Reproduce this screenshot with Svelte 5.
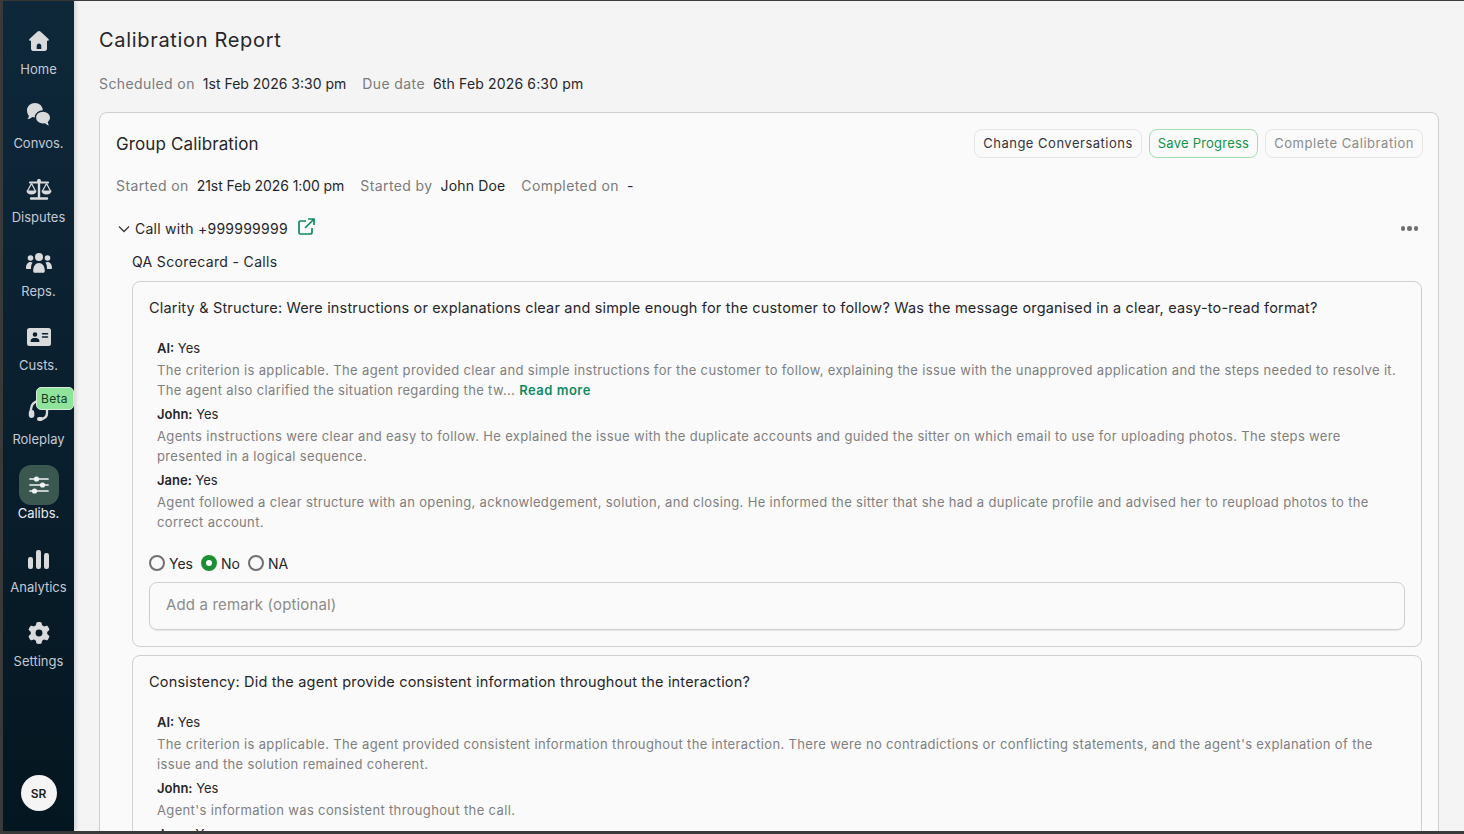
<script>
  const nav = [
    { label: 'Home', icon: 'home' },
    { label: 'Convos.', icon: 'convos' },
    { label: 'Disputes', icon: 'scale' },
    { label: 'Reps.', icon: 'users' },
    { label: 'Custs.', icon: 'card' },
    { label: 'Roleplay', icon: 'headset', beta: true },
    { label: 'Calibs.', icon: 'sliders', active: true },
    { label: 'Analytics', icon: 'chart' },
    { label: 'Settings', icon: 'gear' }
  ];

  const questions = [
    {
      title: 'Clarity & Structure: Were instructions or explanations clear and simple enough for the customer to follow? Was the message organised in a clear, easy-to-read format?',
      answers: [
        { who: 'AI', value: 'Yes', text: 'The criterion is applicable. The agent provided clear and simple instructions for the customer to follow, explaining the issue with the unapproved application and the steps needed to resolve it. The agent also clarified the situation regarding the tw...', more: true },
        { who: 'John', value: 'Yes', text: 'Agents instructions were clear and easy to follow. He explained the issue with the duplicate accounts and guided the sitter on which email to use for uploading photos. The steps were presented in a logical sequence.' },
        { who: 'Jane', value: 'Yes', text: 'Agent followed a clear structure with an opening, acknowledgement, solution, and closing. He informed the sitter that she had a duplicate profile and advised her to reupload photos to the correct account.' }
      ],
      form: true
    },
    {
      title: 'Consistency: Did the agent provide consistent information throughout the interaction?',
      answers: [
        { who: 'AI', value: 'Yes', text: "The criterion is applicable. The agent provided consistent information throughout the interaction. There were no contradictions or conflicting statements, and the agent's explanation of the issue and the solution remained coherent." },
        { who: 'John', value: 'Yes', text: "Agent's information was consistent throughout the call." },
        { who: 'Jane', value: 'Yes', text: '' }
      ]
    }
  ];
</script>

<div class="frame">
  <aside class="sidebar">
    <nav class="nav">
      {#each nav as item}
        <div class="nav-item" class:active={item.active}>
          <span class="nav-icon">
            {#if item.icon === 'home'}
              <svg width="20" height="20" viewBox="0 0 20 20"><path fill="currentColor" fill-rule="evenodd" d="M10 0c.5 0 1 .2 1.400.6l8.100 7.300c.7.7.3 1.800-.7 1.800H18v8.100c0 1.200-.9 2.200-2 2.200H4c-1.100 0-2-1-2-2.200V9.700h-.8c-1 0-1.400-1.100-.7-1.800L8.600.6C9 .2 9.500 0 10 0zM10 12.600c-1.300 0-2.300 1-2.300 2.300V18h4.600v-3.100c0-1.300-1-2.300-2.300-2.300z"/></svg>
            {:else if item.icon === 'convos'}
              <svg width="24" height="24" viewBox="0 0 24 24"><path fill="currentColor" d="M8 0c4.300 0 7.800 3.200 7.800 7.200S12.300 14.400 8 14.400c-.9 0-1.800-.1-2.600-.4C4 15.200 2.300 16 .3 16.100c.9-.9 1.500-2 1.600-3.400C.6 11.400 0 9.400 0 7.200 0 3.200 3.700 0 8 0z"/><path fill="currentColor" stroke="#0d2638" stroke-width="1.300" d="M16 8c4.300 0 7.700 2.900 7.700 6.500 0 1.900-.9 3.500-2.300 4.700.1 1.300.9 2.900 2.300 4.200-2.200-.1-4.300-1-5.800-2.500-.6.100-1.200.2-1.900.2-4.200 0-7.600-2.900-7.600-6.600S11.800 8 16 8z"/></svg>
            {:else if item.icon === 'scale'}
              <svg width="26" height="21" viewBox="0 0 26 21"><g stroke="currentColor" fill="none"><path d="M13 1v18M5 19.500h16" stroke-width="2.400" stroke-linecap="round"/><path d="M4 3.500h18" stroke-width="2.200" stroke-linecap="round"/><path d="M5.500 4.500 1.500 12M5.500 4.500 9.500 12M20.500 4.500 16.500 12M20.500 4.500 24.500 12" stroke-width="1.300"/></g><g fill="currentColor"><circle cx="13" cy="2" r="2"/><path d="M.5 11.500h10c0 2.500-2.200 4-5 4s-5-1.500-5-4zM15.500 11.500h10c0 2.500-2.200 4-5 4s-5-1.500-5-4z"/></g></svg>
            {:else if item.icon === 'users'}
              <svg width="26" height="20" viewBox="0 0 26 20"><g fill="currentColor"><circle cx="13" cy="4" r="4"/><circle cx="4.500" cy="5" r="2.800"/><circle cx="21.500" cy="5" r="2.800"/><path d="M7.200 18c0-5 2.400-8 5.800-8s5.800 3 5.800 8c0 1-.7 1.800-1.500 1.800H8.700c-.8 0-1.500-.8-1.500-1.800zM0 15c0-3.500 1.800-6 4.500-6 .8 0 1.500.2 2.100.6C5.400 11.200 5 13.400 5 16H1c-.6 0-1-.4-1-1zM26 15c0-3.500-1.800-6-4.500-6-.8 0-1.500.2-2.100.6 1.200 1.600 1.600 3.800 1.600 6.400h4c.6 0 1-.4 1-1z"/></g></svg>
            {:else if item.icon === 'card'}
              <svg width="24" height="18" viewBox="0 0 24 18"><path fill="currentColor" fill-rule="evenodd" d="M2.500 0h19A2.500 2.500 0 0 1 24 2.500v13a2.500 2.500 0 0 1-2.500 2.500h-19A2.500 2.500 0 0 1 0 15.500v-13A2.500 2.500 0 0 1 2.500 0zM8 4.200a2.300 2.300 0 1 0 0 4.600 2.300 2.300 0 0 0 0-4.600zM3.500 13.300c0 .5.300.7.700.7h7.600c.4 0 .7-.2.700-.7 0-1.800-1.500-3.300-3.300-3.300H6.800c-1.800 0-3.300 1.500-3.300 3.300zM15.500 5a.8.8 0 0 0 0 1.600h5a.8.8 0 0 0 0-1.600zM15.500 8.200a.8.8 0 0 0 0 1.600h5a.8.8 0 0 0 0-1.600z"/></svg>
            {:else if item.icon === 'headset'}
              <svg width="24" height="24" viewBox="0 0 24 24"><path fill="none" stroke="currentColor" stroke-width="2.400" d="M4 13V10a8 8 0 0 1 16 0v3M20 14c0 4-3 6-7 6" stroke-linecap="round"/><rect x="1.800" y="11" width="5.500" height="8" rx="2.400" fill="currentColor"/><rect x="10" y="18" width="6" height="4" rx="2" fill="currentColor"/></svg>
            {:else if item.icon === 'sliders'}
              <svg width="20" height="18" viewBox="0 0 20 18"><g stroke="currentColor" stroke-width="1.700" stroke-linecap="round"><path d="M1 3h18M1 9h18M1 15h18"/></g><g fill="currentColor"><circle cx="7.500" cy="3" r="2.600"/><circle cx="13.500" cy="9" r="2.600"/><circle cx="5.500" cy="15" r="2.600"/></g></svg>
            {:else if item.icon === 'chart'}
              <svg width="21" height="19" viewBox="0 0 21 19"><g fill="currentColor"><rect x="0" y="7" width="5" height="12" rx="2.200"/><rect x="8" y="0" width="5" height="19" rx="2.200"/><rect x="16" y="3" width="5" height="16" rx="2.200"/></g></svg>
            {:else if item.icon === 'gear'}
              <svg width="22" height="22" viewBox="0 0 512 512"><path fill="currentColor" d="M495.900 166.600c3.200 8.700 .5 18.400-6.400 24.600l-43.300 39.400c1.100 8.300 1.700 16.800 1.700 25.400s-.6 17.100-1.700 25.400l43.300 39.400c6.900 6.200 9.600 15.900 6.400 24.600c-4.400 11.900-9.700 23.300-15.800 34.300l-4.700 8.100c-6.600 11-14 21.400-22.100 31.200c-5.900 7.200-15.700 9.600-24.500 6.800l-55.700-17.700c-13.400 10.300-28.200 18.900-44 25.400l-12.500 57.100c-2 9.100-9 16.300-18.200 17.800c-13.800 2.300-28 3.500-42.500 3.500s-28.700-1.200-42.500-3.500c-9.200-1.500-16.200-8.700-18.200-17.800l-12.500-57.100c-15.800-6.500-30.600-15.100-44-25.400L83.100 425.900c-8.800 2.800-18.600 .3-24.500-6.800c-8.100-9.800-15.500-20.200-22.100-31.200l-4.700-8.100c-6.100-11-11.400-22.400-15.800-34.300c-3.200-8.700-.5-18.400 6.400-24.600l43.300-39.400C64.600 273.100 64 264.600 64 256s.6-17.100 1.700-25.400L22.400 191.200c-6.900-6.200-9.600-15.900-6.400-24.600c4.400-11.900 9.700-23.300 15.800-34.300l4.700-8.100c6.600-11 14-21.400 22.100-31.200c5.900-7.200 15.700-9.600 24.500-6.800l55.700 17.700c13.400-10.300 28.200-18.900 44-25.400l12.500-57.100c2-9.100 9-16.300 18.200-17.800C227.300 1.200 241.500 0 256 0s28.700 1.200 42.500 3.500c9.200 1.500 16.200 8.700 18.200 17.800l12.500 57.100c15.800 6.500 30.600 15.100 44 25.400l55.700-17.700c8.800-2.800 18.600-.3 24.500 6.800c8.100 9.800 15.500 20.200 22.100 31.200l4.700 8.100c6.100 11 11.400 22.400 15.800 34.300zM256 336a80 80 0 1 0 0-160 80 80 0 1 0 0 160z"/></svg>
            {/if}
            {#if item.beta}<span class="beta">Beta</span>{/if}
          </span>
          <span class="nav-label">{item.label}</span>
        </div>
      {/each}
    </nav>
    <div class="avatar">SR</div>
  </aside>

  <main class="main">
    <h1>Calibration Report</h1>
    <div class="meta top-meta">
      <span class="k">Scheduled on</span><span class="v">1st Feb 2026 3:30 pm</span>
      <span class="k">Due date</span><span class="v wide">6th Feb 2026 6:30 pm</span>
    </div>

    <section class="group">
      <div class="group-head">
        <h2>Group Calibration</h2>
        <div class="actions">
          <button class="btn">Change Conversations</button>
          <button class="btn save">Save Progress</button>
          <button class="btn off">Complete Calibration</button>
        </div>
      </div>
      <div class="meta group-meta">
        <span class="k">Started on</span><span class="v tight">21st Feb 2026 1:00 pm</span>
        <span class="k">Started by</span><span class="v wide">John Doe</span>
        <span class="k">Completed on</span><span class="v">-</span>
      </div>

      <div class="call-row">
        <svg class="chev" width="12" height="8" viewBox="0 0 12 8"><path d="M1 1.500 6 6.500 11 1.500" fill="none" stroke="#3a3a3a" stroke-width="1.300"/></svg>
        <span class="call">Call with +999999999</span>
        <svg class="ext" width="17" height="17" viewBox="0 0 17 17"><g fill="none" stroke="#0f8a63" stroke-width="1.700"><path d="M8 3H2.500A1.500 1.500 0 0 0 1 4.500v10A1.500 1.500 0 0 0 2.500 16h10a1.500 1.500 0 0 0 1.500-1.500V10"/><path d="M7 10 15.500 1.500M10 1h6v6"/></g></svg>
        <span class="dots"><i></i><i></i><i></i></span>
      </div>

      <div class="scorecard">QA Scorecard - Calls</div>

      {#each questions as q}
        <article class="question">
          <p class="q-title">{q.title}</p>
          <div class="answers">
            {#each q.answers as a}
              <div class="who"><b>{a.who}:</b> {a.value}</div>
              {#if a.text}
                <p class="reason">{a.text}{#if a.more}{' '}<span class="more">Read more</span>{/if}</p>
              {/if}
            {/each}
          </div>
          {#if q.form}
            <div class="radios">
              <label class="radio"><span class="dot"></span>Yes</label>
              <label class="radio"><span class="dot on"></span>No</label>
              <label class="radio"><span class="dot"></span>NA</label>
            </div>
            <div class="remark">Add a remark (optional)</div>
          {/if}
        </article>
      {/each}
    </section>
  </main>
</div>

<style>
  :global(body) {
    margin: 0;
    background: #2b2b2b;
    overflow: hidden;
  }

  .frame {
    display: flex;
    box-sizing: border-box;
    height: 834px;
    padding: 1px 0 3px 3px;
    background: #3a3a3a;
    font-family: Inter, 'Open Sans', sans-serif;
    color: #222;
    overflow: hidden;
  }

  .sidebar {
    width: 71px;
    flex: none;
    display: flex;
    flex-direction: column;
    justify-content: space-between;
    align-items: center;
    background: linear-gradient(180deg, #0e283a 0%, #0a1f2e 50%, #04161f 100%);
    z-index: 1;
    box-shadow: 2px 0 4px rgba(0, 0, 0, 0.14);
  }

  .nav {
    display: flex;
    flex-direction: column;
    padding-top: 20px;
    width: 100%;
  }

  .nav-item {
    height: 74px;
    display: flex;
    flex-direction: column;
    align-items: center;
    color: #d8dadc;
  }

  .nav-icon {
    position: relative;
    width: 40px;
    height: 40px;
    display: flex;
    align-items: center;
    justify-content: center;
    border-radius: 12px;
  }

  .nav-item.active .nav-icon {
    background: #3a5850;
    color: #f2f4f3;
  }

  .nav-label {
    font-size: 13px;
    line-height: 18px;
    margin-top: -1px;
    color: #c3cad6;
    white-space: nowrap;
  }

  .nav-item.active .nav-label {
    color: #e8ecf2;
  }

  .beta {
    position: absolute;
    top: -4px;
    left: 17px;
    width: 38px;
    height: 23px;
    box-sizing: border-box;
    border: 1px solid #d8ead8;
    border-radius: 5px;
    background: #8fe39a;
    color: #123c24;
    font-size: 12px;
    letter-spacing: 0.3px;
    line-height: 21px;
    text-align: center;
  }

  .avatar {
    width: 36px;
    height: 36px;
    margin-bottom: 20px;
    border-radius: 50%;
    background: #f5f5f5;
    color: #1c1c1c;
    font-size: 12px;
    font-weight: 600;
    display: flex;
    align-items: center;
    justify-content: center;
  }

  .main {
    flex: 1;
    min-width: 0;
    padding: 0 25px;
    background: #f4f4f4;
    overflow: hidden;
  }

  h1 {
    margin: 25px 0 0;
    font-size: 20px;
    line-height: 28px;
    font-weight: 400;
    color: #26262a;
    letter-spacing: 0.68px;
  }

  .meta {
    display: flex;
    align-items: center;
    font-size: 14px;
    line-height: 20px;
  }

  .k {
    color: #7b7b7b;
    margin-right: 8px;
    letter-spacing: 0.4px;
  }

  .v {
    color: #26262a;
    margin-right: 16px;
  }

  .v.wide {
    letter-spacing: 0.15px;
  }

  .v.tight {
    letter-spacing: -0.08px;
  }

  .top-meta {
    margin-top: 20px;
  }

  .group {
    margin-top: 18px;
    padding: 16px;
    border: 1px solid #cfcfcf;
    border-radius: 8px;
    background: #fafafa;
    min-height: 800px;
  }

  .group-head {
    display: flex;
    justify-content: space-between;
    align-items: center;
    height: 29px;
  }

  h2 {
    margin: 0;
    font-size: 17px;
    font-weight: 400;
    letter-spacing: 0.12px;
    color: #26262a;
  }

  .actions {
    display: flex;
    gap: 7px;
    margin: -1px -1px 0 0;
  }

  .btn {
    height: 29px;
    padding: 0 8px;
    border: 1px solid #e6e6e6;
    border-radius: 8px;
    background: #fafafa;
    font: inherit;
    font-size: 13px;
    letter-spacing: 0.5px;
    color: #35353a;
    white-space: nowrap;
  }

  .btn.save {
    border-color: #a3dfae;
    color: #12924a;
    letter-spacing: 0.22px;
  }

  .btn.off {
    color: #8a8a8a;
    letter-spacing: 0.55px;
  }

  .group-meta {
    margin-top: 18px;
  }

  .call-row {
    display: flex;
    align-items: center;
    height: 24px;
    margin-top: 20px;
    position: relative;
  }

  .chev {
    margin: 2px 5px 0 2px;
  }

  .call {
    font-size: 14px;
    letter-spacing: 0.25px;
    color: #26262a;
  }

  .ext {
    margin: -4px 0 0 10px;
  }

  .dots {
    margin: 1px 4px 0 auto;
    display: flex;
    gap: 2px;
  }

  .dots i {
    width: 4.500px;
    height: 4.500px;
    border-radius: 50%;
    background: #6f6f6f;
  }

  .scorecard {
    margin: 12px 0 9px 16px;
    font-size: 14px;
    line-height: 20px;
    letter-spacing: 0.35px;
    color: #26262a;
  }

  .question {
    margin: 0 0 8px 16px;
    padding: 16px;
    border: 1px solid #cfcfcf;
    border-radius: 8px;
    background: #fafafa;
  }

  .q-title {
    margin: 0;
    font-size: 14.500px;
    line-height: 20px;
    letter-spacing: 0.18px;
    color: #26262a;
  }

  .answers {
    margin: 20px 0 0 8px;
  }

  .who {
    font-size: 13px;
    line-height: 20px;
    margin-top: 4px;
    color: #26262a;
  }

  .who b {
    font-weight: 600;
  }

  .reason {
    margin: 2px 0 0;
    font-size: 13px;
    line-height: 20px;
    letter-spacing: 0.35px;
    color: #7f7f7f;
  }

  .more {
    color: #0f8a63;
    font-weight: 600;
    letter-spacing: 0.5px;
  }

  .radios {
    display: flex;
    gap: 8px;
    margin-top: 20px;
    height: 22px;
    align-items: center;
  }

  .radio {
    display: flex;
    align-items: center;
    gap: 4px;
    font-size: 14px;
    color: #26262a;
  }

  .dot {
    box-sizing: border-box;
    width: 16px;
    height: 16px;
    border: 2px solid #6f6f6f;
    border-radius: 50%;
    background: #fafafa;
  }

  .dot.on {
    border: 5px solid #1b8f35;
    background: #fff;
  }

  .remark {
    margin-top: 8px;
    height: 48px;
    box-sizing: border-box;
    padding: 0 16px 4px;
    display: flex;
    align-items: center;
    border: 1px solid #cfcfcf;
    border-radius: 8px;
    box-shadow: 0 1px 1px rgba(0, 0, 0, 0.08);
    font-size: 15px;
    letter-spacing: 0.15px;
    color: #8b8b8b;
  }
</style>
